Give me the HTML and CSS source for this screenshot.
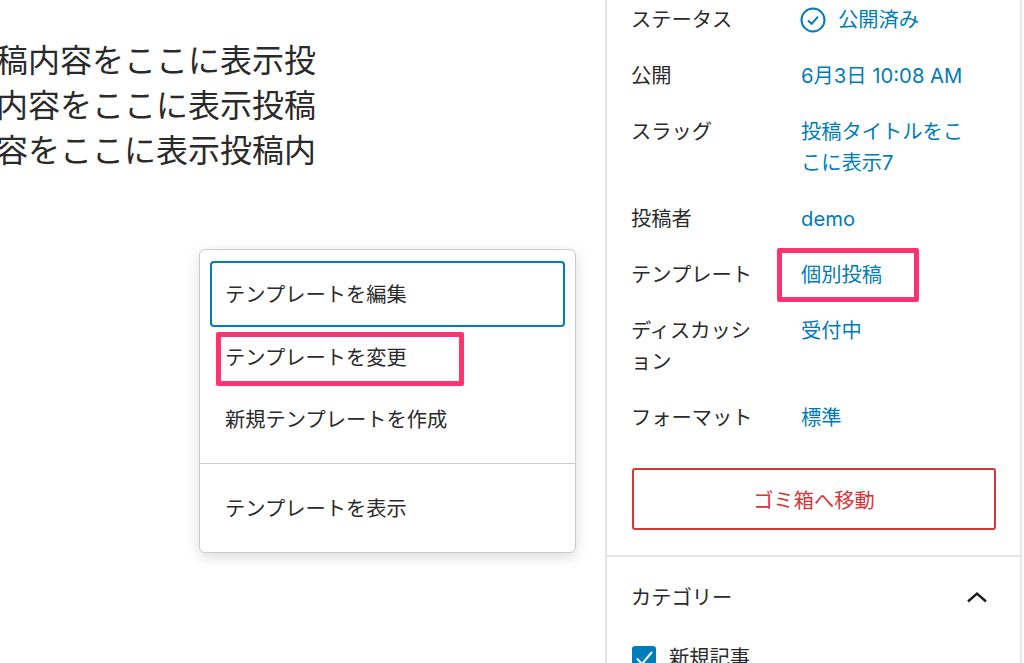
FILE: index.html
```html
<!DOCTYPE html>
<html lang="ja">
<head>
  <meta charset="UTF-8" />
  <meta name="viewport" content="width=device-width, initial-scale=1.0"/>
  <title>投稿の編集</title>
  <link rel="stylesheet" href="styles.css">
</head>
<body>
  <div class="editor-container">
    <!-- Post area -->
    <main class="post-area">
      <div class="post-body">
        <p>稿内容をここに表示投</p>
        <p>内容をここに表示投稿</p>
        <p>容をここに表示投稿内</p>
      </div>

      <div class="template-menu">
        <div class="menu-group">
          <div class="menu-item focused">テンプレートを編集</div>
          <div class="menu-item">テンプレートを変更</div>
          <div class="menu-item">新規テンプレートを作成</div>
        </div>
        <div class="menu-group">
          <div class="menu-item">テンプレートを表示</div>
        </div>
        <span class="highlight highlight-change"></span>
      </div>
    </main>

    <!-- Sidebar -->
    <aside class="sidebar">
      <section class="summary">
        <div class="summary-row">
          <span class="summary-label">ステータス</span>
          <a class="summary-value status-value">
            <svg class="status-icon" viewBox="0 0 26 26" width="26" height="26" aria-hidden="true">
              <circle cx="13" cy="13" r="11.5" fill="none" stroke="#007cba" stroke-width="2"/>
              <path d="M8 13.5l3.6 3.3L18 9.6" fill="none" stroke="#007cba" stroke-width="2"/>
            </svg>
            公開済み
          </a>
        </div>
        <div class="summary-row">
          <span class="summary-label">公開</span>
          <a class="summary-value">6月3日 10:08 AM</a>
        </div>
        <div class="summary-row">
          <span class="summary-label">スラッグ</span>
          <a class="summary-value">投稿タイトルをここに表示7</a>
        </div>
        <div class="summary-row">
          <span class="summary-label">投稿者</span>
          <a class="summary-value">demo</a>
        </div>
        <div class="summary-row">
          <span class="summary-label">テンプレート</span>
          <a class="summary-value">個別投稿</a>
        </div>
        <div class="summary-row">
          <span class="summary-label">ディスカッション</span>
          <a class="summary-value">受付中</a>
        </div>
        <div class="summary-row">
          <span class="summary-label">フォーマット</span>
          <a class="summary-value">標準</a>
        </div>
        <button class="trash-button" type="button">ゴミ箱へ移動</button>
        <span class="highlight highlight-template"></span>
      </section>

      <section class="categories">
        <div class="categories-head">
          <span>カテゴリー</span>
          <svg viewBox="0 0 24 24" width="24" height="24" aria-hidden="true">
            <path d="M3 15.5L12 7.5l9 8" fill="none" stroke="#1e1e1e" stroke-width="2.4"/>
          </svg>
        </div>
        <label class="category-item">
          <span class="checkbox">
            <svg viewBox="0 0 24 24" width="24" height="24" aria-hidden="true">
              <path d="M5 12.5l5 5.5L20 6" fill="none" stroke="#fff" stroke-width="2"/>
            </svg>
          </span>
          新規記事
        </label>
      </section>
    </aside>
  </div>
</body>
</html>
```

FILE: styles.css
```css
* {
  box-sizing: border-box;
  margin: 0;
  padding: 0;
}

html, body {
  height: 663px;
  overflow: hidden;
}

body {
  font-family: Inter, "Noto Sans CJK JP", sans-serif;
  background-color: #fff;
  color: #2a2a2a;
  font-size: 20.25px;
}

.editor-container {
  display: flex;
  height: 663px;
  overflow: hidden;
}

/* Post area */
.post-area {
  width: 605px;
  flex-shrink: 0;
  padding-top: 38px;
}

.post-body {
  width: 316px;
  display: flex;
  flex-direction: column;
  align-items: flex-end;
  font-size: 32px;
  line-height: 45px;
  white-space: nowrap;
}

/* Template menu */
.template-menu {
  position: relative;
  width: 377px;
  height: 304px;
  margin: 76px 0 0 199px;
  background: #fff;
  border: 1px solid #ccc;
  border-radius: 6px;
  box-shadow: 0 4px 14px rgba(0, 0, 0, 0.14);
}

.menu-group {
  padding: 11px 10px 13px;
}

.menu-group + .menu-group {
  border-top: 1px solid #ccc;
  padding-top: 13px;
}

.menu-item {
  display: flex;
  align-items: center;
  height: 62px;
  padding: 2px 0 0 15px;
  line-height: 30px;
}

.menu-item.focused {
  height: 66px;
  margin-bottom: -1px;
  border: 2px solid #007cba;
  border-radius: 4px;
  padding-left: 13px;
}

/* Pink annotation boxes */
.highlight {
  position: absolute;
  border: 5px solid #ff3370;
  border-radius: 2px;
}

.highlight-change {
  left: 16px;
  top: 82px;
  width: 248px;
  height: 54px;
}

.highlight-template {
  left: 170px;
  top: 248px;
  width: 142px;
  height: 54px;
}

/* Sidebar */
.sidebar {
  width: 417px;
  border-left: 2px solid #e6e6e6;
  border-right: 2px solid #e6e6e6;
}

.summary {
  position: relative;
  padding: 4px 23px 25px 24px;
  border-bottom: 2px solid #e6e6e6;
}

.summary-row {
  display: flex;
  margin-bottom: 25px;
  line-height: 31px;
}

.summary-label {
  width: 170px;
  padding-right: 40px;
  flex-shrink: 0;
}

.summary-value {
  color: #007cba;
  width: 170px;
}

.status-value {
  display: flex;
  align-items: center;
  gap: 12px;
  white-space: nowrap;
}

.status-icon {
  margin-left: -1px;
}

.trash-button {
  display: block;
  width: 364px;
  height: 62px;
  margin: 35px 0 0 1px;
  font: inherit;
  color: #d63638;
  background: #fff;
  border: 2px solid #d63638;
  border-radius: 3px;
}

/* Categories */
.categories {
  padding: 26px 25px 0 24px;
}

.categories-head {
  display: flex;
  justify-content: space-between;
  align-items: center;
  height: 30px;
  padding-right: 6px;
  line-height: 30px;
}

.category-item {
  display: flex;
  align-items: center;
  gap: 13px;
  margin-top: 30px;
  line-height: 30px;
}

.checkbox {
  display: flex;
  width: 24px;
  height: 24px;
  margin-left: 1px;
  background: #007cba;
  border-radius: 3px;
}
```
